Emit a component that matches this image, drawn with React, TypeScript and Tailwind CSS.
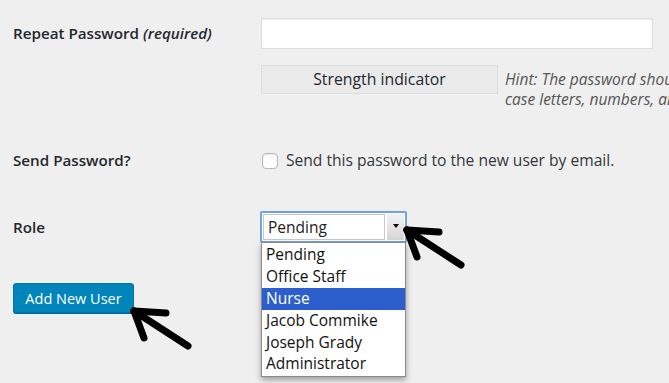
const roles = ["Pending", "Office Staff", "Nurse", "Jacob Commike", "Joseph Grady", "Administrator"];

function Arrow({ className = "" }: { className?: string }) {
  // black hand-drawn style pointer, tip at top-left (4,4)
  return (
    <svg className={className} width="66" height="44" viewBox="0 0 66 44" fill="none">
      <g stroke="#000" strokeWidth="7" strokeLinecap="round" strokeLinejoin="round">
        <path d="M5 4 L59 39" />
        <path d="M5 4 L37 6" />
        <path d="M5 4 L15 31" />
      </g>
    </svg>
  );
}

export default function App() {
  return (
    <div className="relative h-[383px] w-[669px] overflow-hidden bg-[#efefef] font-['Open_Sans',sans-serif] text-[#23282d]">
      {/* repeat password */}
      <div className="flex pt-[18px]">
        <div className="flex h-[30px] w-[261px] items-center pl-[13px] text-[15.2px] font-semibold">
          Repeat Password&nbsp;<em className="font-semibold">(required)</em>
        </div>
        <div className="h-[31px] w-[392px] border border-[#dddddd] bg-white shadow-[inset_0_1px_2px_rgba(0,0,0,0.07)]" />
      </div>

      <div className="mt-[16px] flex pl-[261px]">
        <div className="flex h-[29px] w-[237px] shrink-0 items-center justify-center border border-[#dddddd] bg-[#eaeaea] text-[15.8px] text-[#23282d]">
          Strength indicator
        </div>
        <p className="ml-[7px] mt-[4px] whitespace-nowrap text-[15.5px] italic leading-[20px] text-[#555]">
          Hint: The password should be at least twelve characters long.
          <br />
          case letters, numbers, and symbols
        </p>
      </div>

      {/* send password */}
      <div className="mt-[40px] flex items-center">
        <div className="w-[261px] pl-[13px] text-[15.2px] font-semibold">Send Password?</div>
        <span className="ml-[1px] h-[16px] w-[16px] rounded-[4px] border border-[#b4b9be] bg-white shadow-[inset_0_1px_2px_rgba(0,0,0,0.1)]" />
        <span className="ml-[8px] text-[15.6px] text-[#32373c]">Send this password to the new user by email.</span>
      </div>

      {/* role */}
      <div className="mt-[39px] flex items-center">
        <div className="w-[260px] pl-[13px] text-[15.2px] font-semibold">Role</div>
        <div className="relative">
          <div className="flex h-[32px] w-[147px] items-stretch rounded-[2px] border-2 border-[#6fa4e0] bg-white p-px">
            <div className="flex flex-1 items-center border border-[#c9c9c9] pl-[4px] text-[15.5px] text-[#222]">
              Pending
            </div>
            <div className="ml-[2px] flex w-[17px] items-center justify-center bg-gradient-to-b from-[#f2f2f2] to-[#d6d6d6]">
              <span className="mb-[2px] h-0 w-0 border-x-[3px] border-t-[4px] border-x-transparent border-t-black" />
            </div>
          </div>
          <ul className="absolute left-[1px] top-[31px] z-10 w-[145px] border border-[#8a8a8a] bg-white py-[1px] text-[15.5px] leading-[21.8px] text-[#111] shadow-[0_3px_6px_rgba(0,0,0,0.35)]">
            {roles.map((r) => (
              <li key={r} className={r === "Nurse" ? "bg-[#2c5fcd] pl-[4px] text-white" : "pl-[4px]"}>
                {r}
              </li>
            ))}
          </ul>
          <Arrow className="absolute left-[142px] top-[15px] z-20" />
        </div>
      </div>

      {/* submit */}
      <div className="mt-[40px] pl-[13px]">
        <div className="relative inline-block">
          <button className="h-[30px] w-[121px] rounded-[3px] border border-[#0073aa] bg-[#0085ba] text-[14.5px] text-white shadow-[0_1px_0_#006799]">
            Add New User
          </button>
          <Arrow className="absolute left-[116px] top-[24px]" />
        </div>
      </div>
    </div>
  );
}
